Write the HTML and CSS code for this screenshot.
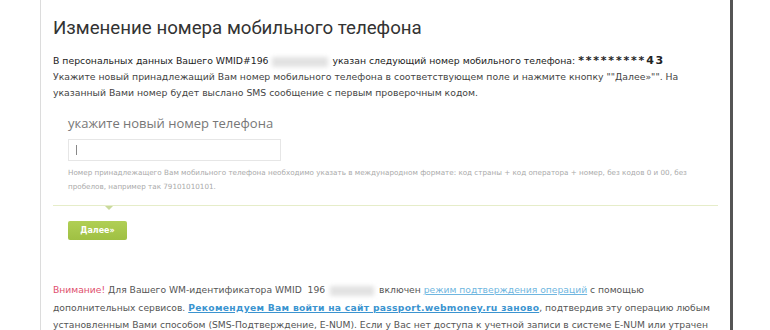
FILE: index.html
```html
<!DOCTYPE html>
<html lang="ru">
<head>
    <meta charset="UTF-8">
    <title>Изменение номера мобильного телефона</title>
    <link rel="stylesheet" href="styles.css">
</head>
<body>
    <div class="frame">
        <div class="content">
            <h1 class="title">Изменение номера мобильного телефона</h1>

            <p class="intro">
                <span class="dark">В персональных данных Вашего WMID#196<span class="blur"></span>указан следующий номер мобильного телефона:</span> <span class="stars">*********43</span><br>
                Укажите новый принадлежащий Вам номер мобильного телефона в соответствующем поле и нажмите кнопку ""Далее»"". На<br>
                указанный Вами номер будет выслано SMS сообщение с первым проверочным кодом.
            </p>

            <div class="form">
                <div class="label">укажите новый номер телефона</div>
                <div class="field"><span class="caret"></span></div>
                <div class="hint">
                    Номер принадлежащего Вам мобильного телефона необходимо указать в международном формате: код страны + код оператора + номер, без кодов 0 и 00, без<br>
                    пробелов, например так 79101010101.
                </div>
            </div>

            <div class="separator"><span class="arrow"></span></div>

            <button class="next">Далее»</button>

            <p class="notice">
                <span class="warn">Внимание!</span> Для Вашего WM-идентификатора WMID&nbsp; 196<span class="blur wide"></span>включен <a class="link" href="#">режим подтверждения операций</a> с помощью<br>
                дополнительных сервисов. <a class="link strong" href="#">Рекомендуем Вам войти на сайт passport.webmoney.ru заново</a>, подтвердив эту операцию любым<br>
                установленным Вами способом (SMS-Подтверждение, E-NUM). Если у Вас нет доступа к учетной записи в системе E-NUM или утрачен
            </p>
        </div>
    </div>
</body>
</html>
```

FILE: styles.css
```css
body {
    margin: 0;
    padding: 0;
    background-color: #fff;
    font-family: "DejaVu Sans", Verdana, sans-serif;
    color: #444;
}
.frame {
    margin-left: 40px;
    width: 689px;
    height: 330px;
    border-left: 1px solid #dcdcdc;
    border-right: 3px solid #555;
    overflow: hidden;
}
.content {
    padding: 14px 0 0 12px;
}
.title {
    font-family: Roboto, sans-serif;
    font-weight: normal;
    font-size: 18.7px;
    color: #333;
    margin: 0;
    line-height: 28px;
}
.intro {
    font-size: 9.3px;
    line-height: 16px;
    color: #444;
    margin: 11px 0 0;
    white-space: nowrap;
}
.dark {
    color: #222;
}
.stars {
    font-weight: bold;
    font-size: 11px;
    letter-spacing: 1.8px;
    color: #222;
}
.blur {
    display: inline-block;
    width: 56px;
    height: 10px;
    margin: 0 4px;
    vertical-align: middle;
    background-color: #e2e2e2;
    filter: blur(2px);
}
.blur.wide {
    width: 44px;
    margin: 0 5px;
}
.form {
    padding-left: 15px;
    margin-top: 12px;
}
.label {
    font-family: "Open Sans", sans-serif;
    font-size: 13px;
    color: #777;
    line-height: 20px;
}
.field {
    box-sizing: border-box;
    margin-top: 6px;
    width: 213px;
    height: 22px;
    border: 1px solid #e6e6e6;
    display: flex;
    align-items: center;
    padding-left: 7px;
}
.caret {
    width: 1px;
    height: 10px;
    background-color: #888;
}
.hint {
    font-size: 7.2px;
    line-height: 14px;
    color: #aaa;
    margin-top: 5px;
    white-space: nowrap;
}
.separator {
    position: relative;
    width: 665px;
    margin-top: 11px;
    border-top: 1px solid #e6edc9;
}
.arrow {
    position: absolute;
    left: 52px;
    top: 0;
    border-left: 4px solid transparent;
    border-right: 4px solid transparent;
    border-top: 4px solid #c9da9c;
}
.next {
    display: block;
    margin: 15px 0 0 15px;
    width: 59px;
    height: 19px;
    border: none;
    border-radius: 2px;
    background: linear-gradient(#b0cf55, #9fc043);
    color: #fff;
    font-family: "DejaVu Sans", sans-serif;
    font-weight: bold;
    font-size: 8px;
    padding: 0;
}
.notice {
    font-size: 9.2px;
    line-height: 17.5px;
    color: #555;
    margin: 41px 0 0;
    white-space: nowrap;
}
.warn {
    color: #e0506e;
}
.link {
    color: #6fb6e0;
}
.link.strong {
    color: #3b94d0;
    font-weight: bold;
    letter-spacing: 0.3px;
}
```
